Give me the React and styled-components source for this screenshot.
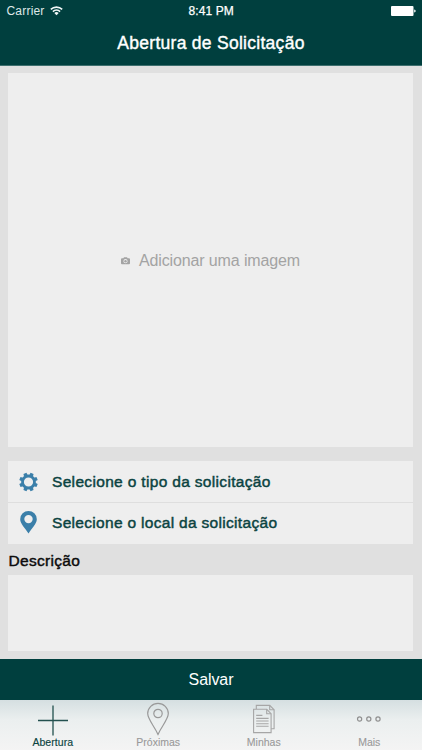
import styled, { createGlobalStyle } from 'styled-components';

const GlobalStyle = createGlobalStyle`
  * {
    box-sizing: border-box;
  }
  body {
    margin: 0;
    background: #e0e0e0;
    font-family: 'Liberation Sans', Arial, sans-serif;
  }
`;

const Screen = styled.div`
  display: flex;
  flex-direction: column;
  width: 422px;
  height: 750px;
  background: #e0e0e0;
  overflow: hidden;
`;

const Header = styled.header`
  height: 66px;
  flex: none;
  background: #003f3e;
  border-bottom: 1px solid #3d6f6e;
  color: white;
`;

const StatusBar = styled.div`
  display: grid;
  grid-template-columns: 1fr auto 1fr;
  align-items: center;
  height: 22px;
  padding: 0 6px 0 6.5px;
  font-size: 12px;
  line-height: 22px;
`;

const Carrier = styled.div`
  display: flex;
  align-items: center;
  gap: 5px;
  color: #dfe8e8;
  letter-spacing: 0.2px;
`;

const Clock = styled.div`
  letter-spacing: 0.1px;
  -webkit-text-stroke: 0.25px white;
`;

const Battery = styled.svg`
  justify-self: end;
`;

const Title = styled.h1`
  margin: 0;
  font-size: 17.5px;
  font-weight: 400;
  line-height: 43px;
  text-align: center;
  letter-spacing: ${(props) => props.spacing};
  -webkit-text-stroke: 0.4px white;
`;

const Content = styled.main`
  display: flex;
  flex-direction: column;
  flex: 1;
  padding: 7px 9px 8px 8px;
`;

const ImagePicker = styled.button`
  display: flex;
  align-items: center;
  justify-content: center;
  gap: 9px;
  height: 374px;
  padding: 1px 0 0;
  border: 0;
  background: #eeeeee;
  color: #a3a3a3;
  font-family: inherit;
  font-size: 16px;
  letter-spacing: ${(props) => props.spacing};
`;

const OptionList = styled.div`
  margin-top: 14px;
  background: #eeeeee;
`;

const Option = styled.div`
  display: flex;
  align-items: center;
  height: ${(props) => props.height};
  padding: 0 0 ${(props) => props.lift || '0'} 10px;
  border-bottom: ${(props) => props.border || '0'};
  color: #0b4341;
  font-size: 15.5px;
  letter-spacing: ${(props) => props.spacing};
  -webkit-text-stroke: 0.45px #0b4341;

  svg {
    margin-right: 13px;
    flex: none;
  }
`;

const FieldLabel = styled.label`
  height: 31px;
  padding-left: 0.5px;
  color: #0c0c0c;
  font-size: 15.5px;
  line-height: 34px;
  letter-spacing: ${(props) => props.spacing};
  -webkit-text-stroke: 0.45px #0c0c0c;
`;

const Description = styled.textarea`
  display: block;
  flex: 1;
  width: 100%;
  border: 0;
  background: #eeeeee;
  resize: none;
`;

const SaveButton = styled.button`
  height: 41px;
  flex: none;
  padding: 0;
  border: 0;
  background: #003f3e;
  color: white;
  font-family: inherit;
  font-size: 16px;
  letter-spacing: ${(props) => props.spacing};
`;

const TabBar = styled.nav`
  display: grid;
  grid-template-columns: repeat(4, 1fr);
  height: 50px;
  flex: none;
  background: linear-gradient(#d5dfe1, #ebefef 40%, #f4f4f4);
`;

const Tab = styled.div`
  display: flex;
  flex-direction: column;
  align-items: center;
  color: ${(props) => (props.$active ? '#0b4341' : '#999999')};
  font-size: 10.5px;
  line-height: 12px;
  letter-spacing: ${(props) => props.spacing};
  -webkit-text-stroke: ${(props) => (props.$active ? '0.15px' : '0.1px')};

  svg {
    flex: none;
  }
`;

const WifiIcon = () => (
  <svg width='13' height='10' viewBox='0 0 13 10' fill='none' stroke='#f2f7f7' strokeWidth='1.6'>
    <path d='M0.8 3.4a8.2 8.2 0 0 1 11.4 0' />
    <path d='M2.9 5.6a5.2 5.2 0 0 1 7.2 0' />
    <path d='M4.3 7a3.2 3.2 0 0 1 4.4 0L6.5 9.2z' fill='#f2f7f7' stroke='none' />
  </svg>
);

const BatteryIcon = () => (
  <Battery width='25' height='10' viewBox='0 0 25 10' fill='white'>
    <rect x='0' y='0' width='22.5' height='10' rx='1' />
    <path d='M23.2 3.4q1.5.3 1.5 1.6t-1.5 1.6z' />
  </Battery>
);

const CameraIcon = () => (
  <svg width='9' height='8' viewBox='0 0 9 8'>
    <path
      fill='#a3a3a3'
      fillRule='evenodd'
      d='M1 1.3h1.4L3 .3h3l.6 1H8q1 0 1 1v4q0 1-1 1H1q-1 0-1-1v-4q0-1 1-1zM4.5 2.1a2.1 2.1 0 1 0 0 4.2 2.1 2.1 0 0 0 0-4.2z'
    />
    <circle cx='4.5' cy='4.2' r='1.2' fill='#a3a3a3' />
  </svg>
);

const GearIcon = () => (
  <svg width='21' height='20' viewBox='0 0 21 20' fill='none' stroke='#3b7fa9'>
    <circle cx='10.5' cy='10' r='6' strokeWidth='2.8' />
    {[22.5, 67.5, 112.5, 157.5, 202.5, 247.5, 292.5, 337.5].map((angle) => (
      <path key={angle} d='M8.5 3.4l.4-2.7h3.2l.4 2.7z' fill='#3b7fa9' stroke='none' transform={`rotate(${angle} 10.5 10)`} />
    ))}
  </svg>
);

const PinIcon = () => (
  <svg width='21' height='26' viewBox='0 0 21 26'>
    <path
      fill='#3b7fa9'
      fillRule='evenodd'
      d='M10.5.9a8.3 8.3 0 0 0-8.3 8.3c0 4.6 4.8 8.4 8.3 14.3 3.5-5.9 8.3-9.7 8.3-14.3A8.3 8.3 0 0 0 10.5.9zm0 4a4.2 4.2 0 1 1 0 8.4 4.2 4.2 0 0 1 0-8.4z'
    />
  </svg>
);

const PlusIcon = () => (
  <svg width='32' height='36' viewBox='0 0 32 36' stroke='#23514f' strokeWidth='1.3'>
    <path d='M16 5.5v30M1 20.5h30' />
  </svg>
);

const PinOutlineIcon = () => (
  <svg width='24' height='36' viewBox='0 0 24 36' fill='none' stroke='#999999' strokeWidth='1.2'>
    <path d='M12 3.3A10.3 10.3 0 0 0 1.7 13.6C1.7 19.2 8.2 26 12 34.4 15.8 26 22.3 19.2 22.3 13.6A10.3 10.3 0 0 0 12 3.3z' />
    <circle cx='12' cy='13.5' r='4.2' />
  </svg>
);

const DocumentsIcon = () => (
  <svg width='24' height='36' viewBox='0 0 24 36' fill='none' stroke='#a6a6a6' strokeWidth='1.1'>
    <path d='M4.3 9V5.4h13.4l4.4 4.4v19h-3' />
    <path d='M17.7 5.4v4.4h4.4' />
    <path d='M1.6 9.3h13.1l4.4 4.4v18.9H1.6z' />
    <path d='M14.7 9.3v4.4h4.4' />
    <path d='M4.2 15.4h6.2M4.2 18.4h12.4M4.2 21h12.4M4.2 23.7h12.4M4.2 26.3h12.4' />
  </svg>
);

const MoreIcon = () => (
  <svg width='26' height='36' viewBox='0 0 26 36' fill='none' stroke='#909090' strokeWidth='1.2'>
    <circle cx='3.6' cy='19' r='2.1' />
    <circle cx='12.8' cy='19' r='2.1' />
    <circle cx='22' cy='19' r='2.1' />
  </svg>
);

const App = () => {
  return (
    <>
      <GlobalStyle />
      <Screen>
        <Header>
          <StatusBar>
            <Carrier>
              Carrier
              <WifiIcon />
            </Carrier>
            <Clock>8:41 PM</Clock>
            <BatteryIcon />
          </StatusBar>
          <Title spacing='0.28px'>Abertura de Solicitação</Title>
        </Header>
        <Content>
          <ImagePicker spacing='-0.13px'>
            <CameraIcon />
            <span>Adicionar uma imagem</span>
          </ImagePicker>
          <OptionList>
            <Option height='42px' border='1px solid #dedede' spacing='0.33px'>
              <GearIcon />
              Selecione o tipo da solicitação
            </Option>
            <Option height='41px' lift='2px' spacing='0.31px'>
              <PinIcon />
              Selecione o local da solicitação
            </Option>
          </OptionList>
          <FieldLabel htmlFor='descricao' spacing='0.3px'>
            Descrição
          </FieldLabel>
          <Description id='descricao' />
        </Content>
        <SaveButton spacing='-0.1px'>Salvar</SaveButton>
        <TabBar>
          <Tab $active spacing='0.05px'>
            <PlusIcon />
            Abertura
          </Tab>
          <Tab spacing='0px'>
            <PinOutlineIcon />
            Próximas
          </Tab>
          <Tab spacing='0px'>
            <DocumentsIcon />
            Minhas
          </Tab>
          <Tab spacing='0px'>
            <MoreIcon />
            Mais
          </Tab>
        </TabBar>
      </Screen>
    </>
  );
};

export default App;
